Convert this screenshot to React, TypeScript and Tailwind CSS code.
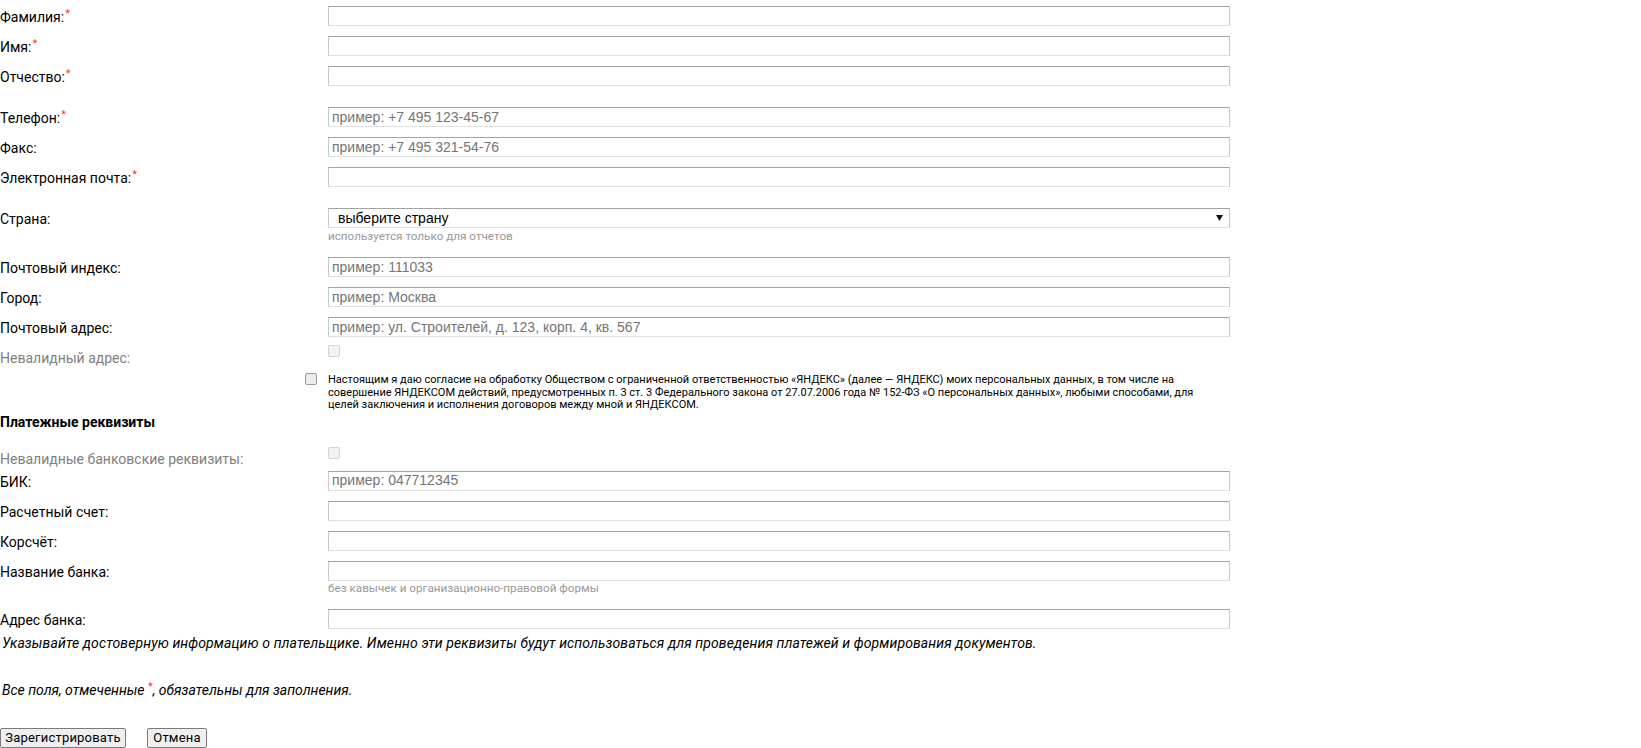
import React from "react";

const inputCls =
  "block h-[20px] w-[902px] border border-t-[#a3a3a3] border-l-[#c8c8c8] border-r-[#c8c8c8] border-b-[#e0e0e0] bg-white px-[3px] font-['Liberation_Sans',Arial,sans-serif] text-[14px] text-black outline-none placeholder:text-[#757575]";

function Req() {
  return <sup className="ml-px text-[11px] text-[#f33]">*</sup>;
}

function Row({
  label,
  req,
  placeholder,
}: {
  label: string;
  req?: boolean;
  placeholder?: string;
}) {
  return (
    <div className="flex h-[30px]">
      <div className="w-[328px] shrink-0 pt-[7px] leading-[20px]">
        {label}
        {req && <Req />}
      </div>
      <div className="pt-[6px]">
        <input className={inputCls} placeholder={placeholder} />
      </div>
    </div>
  );
}

function DisabledBox() {
  return (
    <span className="block h-[12px] w-[12px] rounded-[2px] border border-[#d3d3d3] bg-[#f3f3f3]" />
  );
}

export default function App() {
  return (
    <div className="min-h-[748px] w-[1641px] bg-white font-['Roboto',sans-serif] text-[14px] text-black">
      <Row label="Фамилия:" req />
      <Row label="Имя:" req />
      <Row label="Отчество:" req />
      <div className="h-[11px]" />
      <Row label="Телефон:" req placeholder="пример: +7 495 123-45-67" />
      <Row label="Факс:" placeholder="пример: +7 495 321-54-76" />
      <Row label="Электронная почта:" req />
      <div className="h-[11px]" />

      <div className="flex h-[49px]">
        <div className="w-[328px] shrink-0 pt-[7px] leading-[20px]">Страна:</div>
        <div className="pt-[6px]">
          <div className="flex h-[20px] w-[902px] items-center justify-between border border-t-[#a3a3a3] border-l-[#c8c8c8] border-r-[#c8c8c8] border-b-[#e0e0e0] bg-white pl-[9px] pr-[6px] font-['Liberation_Sans',Arial,sans-serif] text-[14px] text-black">
            <span>выберите страну</span>
            <svg width="7" height="6" viewBox="0 0 7 6" className="block">
              <path d="M0 0 H7 L3.5 6 Z" fill="#111" />
            </svg>
          </div>
          <div className="mt-px text-[11.7px] leading-[15px] text-[#999]">
            используется только для отчетов
          </div>
        </div>
      </div>

      <Row label="Почтовый индекс:" placeholder="пример: 111033" />
      <Row label="Город:" placeholder="пример: Москва" />
      <Row
        label="Почтовый адрес:"
        placeholder="пример: ул. Строителей, д. 123, корп. 4, кв. 567"
      />

      <div className="flex h-[30px]">
        <div className="w-[328px] shrink-0 pt-[7px] leading-[20px] text-[#808080]">
          Невалидный адрес:
        </div>
        <div className="pt-[4px]">
          <DisabledBox />
        </div>
      </div>

      <div className="flex">
        <div className="flex w-[328px] shrink-0 justify-end pr-[11px] pt-[2px]">
          <span className="block h-[12px] w-[12px] rounded-[2px] border border-[#9a9a9a] bg-[#ebebeb]" />
        </div>
        <div className="w-[902px] pt-[3px] text-[11px] leading-[12.6px]">
          Настоящим я даю согласие на обработку Обществом с ограниченной ответственностью «ЯНДЕКС» (далее — ЯНДЕКС) моих персональных данных, в том числе на
          <br />
          совершение ЯНДЕКСОМ действий, предусмотренных п. 3 ст. 3 Федерального закона от 27.07.2006 года № 152‑ФЗ «О персональных данных», любыми способами, для
          <br />
          целей заключения и исполнения договоров между мной и ЯНДЕКСОМ.
        </div>
      </div>

      <div className="font-bold leading-[20px]">Платежные реквизиты</div>

      <div className="mt-[11px] flex h-[22px]">
        <div className="w-[328px] shrink-0 pt-[6px] leading-[20px] text-[#808080]">
          Невалидные банковские реквизиты:
        </div>
        <div className="pt-[4px]">
          <DisabledBox />
        </div>
      </div>

      <Row label="БИК:" placeholder="пример: 047712345" />
      <Row label="Расчетный счет:" />
      <Row label="Корсчёт:" />

      <div className="flex h-[48.5px]">
        <div className="w-[328px] shrink-0 pt-[7px] leading-[20px]">Название банка:</div>
        <div className="pt-[6px]">
          <input className={inputCls} />
          <div className="text-[11.7px] leading-[15px] text-[#999]">
            без кавычек и организационно-правовой формы
          </div>
        </div>
      </div>

      <div className="flex h-[30px]">
        <div className="w-[328px] shrink-0 pt-[7px] leading-[20px]">Адрес банка:</div>
        <div className="pt-[6px]">
          <input className={inputCls} />
        </div>
      </div>

      <div className="pl-[2px] italic leading-[20px] tracking-[0.1px]">
        Указывайте достоверную информацию о плательщике. Именно эти реквизиты будут использоваться для проведения платежей и формирования документов.
      </div>

      <div className="mt-[27px] pl-[2px] italic leading-[20px]">
        Все поля, отмеченные <sup className="text-[11px] not-italic text-[#f33]">*</sup>, обязательны для заполнения.
      </div>

      <div className="mt-[28px] flex">
        <button className="h-[20px] w-[126px] rounded-[2px] border border-[#7a7a7a] bg-[#efefef] text-[13px] leading-[18px] tracking-[0.2px] text-black">
          Зарегистрировать
        </button>
        <button className="ml-[21px] h-[20px] w-[60px] rounded-[2px] border border-[#7a7a7a] bg-[#efefef] text-[13px] leading-[18px] tracking-[0.2px] text-black">
          Отмена
        </button>
      </div>
    </div>
  );
}
